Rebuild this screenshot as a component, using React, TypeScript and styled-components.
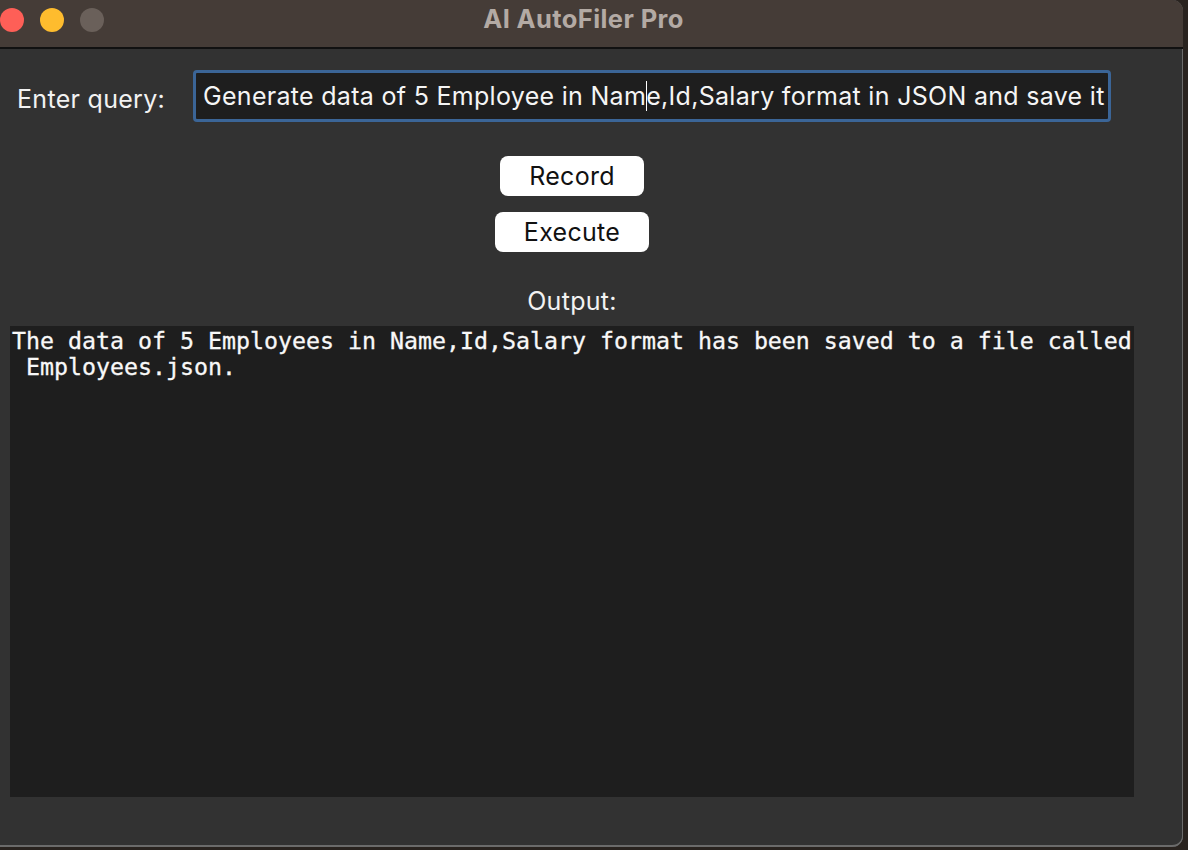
import React from "react";
import styled, { createGlobalStyle } from "styled-components";

const Global = createGlobalStyle`
  html, body { margin: 0; padding: 0; background: #29231f; }
  body { width: 1188px; height: 850px; overflow: hidden; font-family: "Inter", "Liberation Sans", sans-serif; }
`;

const Window = styled.div`
  width: 1183px;
  height: 847px;
  background: #323232;
  border-radius: 0 11px 11px 0;
  box-shadow: inset -1px 0 0 #6b6b6b, inset 0 -2px 0 #6b6b6b;
  overflow: hidden;
  display: flex;
  flex-direction: column;
`;

const TitleBar = styled.div`
  height: 47px;
  background: #453c37;
  border-bottom: 2px solid #111;
  position: relative;
  display: flex;
  align-items: center;
  justify-content: center;
  flex-shrink: 0;
`;

const Lights = styled.div`
  position: absolute;
  left: 0;
  top: 8px;
  display: flex;
  gap: 16px;
`;

const Light = styled.span<{ $c: string }>`
  width: 24px;
  height: 24px;
  border-radius: 50%;
  background: ${(p) => p.$c};
`;

const Title = styled.div`
  font-family: "Inter", "Liberation Sans", sans-serif;
  font-weight: 700;
  font-size: 25.5px;
  letter-spacing: 0.4px;
  color: #b3aaa4;
  margin-left: -16px;
  margin-top: -10px;
`;

const Content = styled.div`
  width: 1144px;
  display: flex;
  flex-direction: column;
  align-items: center;
  padding-top: 21px;
`;

const QueryRow = styled.div`
  align-self: stretch;
  display: flex;
  align-items: center;
  padding-left: 17px;
  height: 52px;
`;

const Label = styled.div`
  font-size: 25px;
  letter-spacing: 0.3px;
  color: #f2f2f2;
  width: 176px;
  margin-top: 6px;
`;

const Input = styled.div`
  box-sizing: border-box;
  width: 918px;
  height: 52px;
  border: 3px solid #3b6597;
  border-radius: 4px;
  background: #1e1e1e;
  color: #f5f5f5;
  font-size: 25px;
  letter-spacing: 0.3px;
  display: flex;
  align-items: center;
  padding-left: 7px;
  white-space: nowrap;
  overflow: hidden;
`;

const Caret = styled.span`
  display: inline-block;
  width: 1px;
  height: 30px;
  background: #fff;
  vertical-align: middle;
  margin: 0 -0.5px;
`;

const Button = styled.div<{ $w: number; $mt: number }>`
  box-sizing: border-box;
  width: ${(p) => p.$w}px;
  height: 40px;
  margin-top: ${(p) => p.$mt}px;
  background: #fff;
  border-radius: 8px;
  color: #111;
  font-size: 25px;
  letter-spacing: 0.3px;
  display: flex;
  align-items: center;
  justify-content: center;
`;

const OutputLabel = styled.div`
  margin-top: 36px;
  font-size: 25px;
  letter-spacing: 0.3px;
  color: #f2f2f2;
  height: 26px;
  line-height: 26px;
`;

const OutputBox = styled.pre`
  box-sizing: border-box;
  margin: 12px 0 0 10px;
  width: 1124px;
  height: 471px;
  background: #1e1e1e;
  color: #f8f8f8;
  font-family: "DejaVu Sans Mono", "Liberation Mono", monospace;
  font-size: 23.25px;
  line-height: 26px;
  padding: 2px 0 0 2px;
  white-space: pre;
  overflow: hidden;
  align-self: flex-start;
  -webkit-text-stroke: 0.3px #f8f8f8;
`;

export default function App() {
  return (
    <>
      <Global />
      <Window>
        <TitleBar>
          <Lights>
            <Light $c="#fe5f57" />
            <Light $c="#febc2e" />
            <Light $c="#6a605a" />
          </Lights>
          <Title>AI AutoFiler Pro</Title>
        </TitleBar>
        <Content>
          <QueryRow>
            <Label>Enter query:</Label>
            <Input>
              Generate data of 5 Employee in Nam<Caret />e,Id,Salary format in JSON and save it
            </Input>
          </QueryRow>
          <Button $w={144} $mt={34}>Record</Button>
          <Button $w={154} $mt={16}>Execute</Button>
          <OutputLabel>Output:</OutputLabel>
          <OutputBox>
            {"The data of 5 Employees in Name,Id,Salary format has been saved to a file called\n Employees.json."}
          </OutputBox>
        </Content>
      </Window>
    </>
  );
}
